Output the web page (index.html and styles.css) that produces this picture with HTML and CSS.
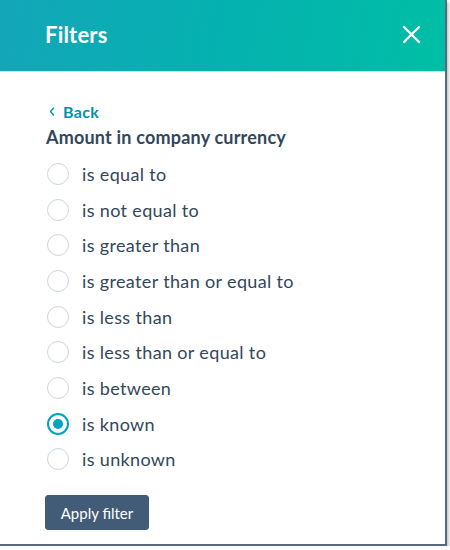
FILE: index.html
```html
<!DOCTYPE html>
<html>
<head>
<meta charset="utf-8">
<link rel="stylesheet" href="styles.css">
</head>
<body>
<div class="panel">
  <header class="header">
    <h1 class="title">Filters</h1>
    <svg class="close" width="19" height="19" viewBox="0 0 19 19"><path d="M2 2 L17 17 M17 2 L2 17" stroke="#fff" stroke-width="2.4" stroke-linecap="round" fill="none"/></svg>
  </header>
  <div class="content">
    <a class="back"><svg class="chev" width="6" height="9" viewBox="0 0 6 9"><path d="M4.5 1 L1.5 4.5 L4.5 8" stroke="#0091ae" stroke-width="1.4" fill="none" stroke-linecap="round" stroke-linejoin="round"/></svg>Back</a>
    <h2 class="heading">Amount in company currency</h2>
    <ul class="options">
      <li class="option"><span class="radio"></span>is equal to</li>
      <li class="option"><span class="radio"></span>is not equal to</li>
      <li class="option"><span class="radio"></span>is greater than</li>
      <li class="option"><span class="radio"></span>is greater than or equal to</li>
      <li class="option"><span class="radio"></span>is less than</li>
      <li class="option"><span class="radio"></span>is less than or equal to</li>
      <li class="option"><span class="radio"></span>is between</li>
      <li class="option"><span class="radio checked"></span>is known</li>
      <li class="option"><span class="radio"></span>is unknown</li>
    </ul>
    <button class="apply">Apply filter</button>
  </div>
</div>
</body>
</html>
```
FILE: styles.css
```css
html, body {
  margin: 0;
  padding: 0;
  background: #fff;
}
body {
  font-family: Lato, "Open Sans", sans-serif;
  color: #33475b;
}
.panel {
  width: 445px;
  height: 544px;
  background: #fff;
  border-right: 2px solid #5a6a7e;
  border-bottom: 2px solid #5a6a7e;
  box-shadow: 2px 2px 2px rgba(90, 106, 126, 0.35);
  display: flex;
  flex-direction: column;
}
.header {
  height: 71px;
  border-bottom: 1px solid #bfe6ec;
  background: linear-gradient(100deg, #13a5b9 0%, #05b2b0 50%, #00bea5 100%);
  display: flex;
  align-items: center;
  justify-content: space-between;
  padding: 0 24px 0 45px;
  flex-shrink: 0;
}
.title {
  margin: 0;
  color: #fff;
  font-size: 22px;
  font-weight: 700;
  letter-spacing: 0.2px;
  margin-top: -3px;
}
.close {
  margin-top: -3px;
}
.content {
  padding: 28px 0 0 46px;
  display: flex;
  flex-direction: column;
  align-items: flex-start;
}
.back {
  color: #0091ae;
  font-size: 16px;
  font-weight: 700;
  letter-spacing: 0.3px;
  display: flex;
  align-items: center;
  gap: 8px;
  height: 22px;
  margin-left: 3px;
}
.chev {
  margin-top: 1px;
}
.heading {
  margin: 2px 0 0 0;
  font-size: 18px;
  font-weight: 700;
  line-height: 26px;
  letter-spacing: 0.2px;
}
.options {
  list-style: none;
  margin: 6px 0 0 0;
  padding: 0;
}
.option {
  display: flex;
  align-items: center;
  height: 35.7px;
  font-size: 18px;
  letter-spacing: 0.35px;
  gap: 13px;
}
.radio {
  width: 22px;
  height: 22px;
  border: 1.5px solid #cbd6e2;
  border-radius: 50%;
  box-sizing: border-box;
  display: inline-block;
  position: relative;
  margin-left: 1px;
  flex-shrink: 0;
}
.radio.checked {
  border: 2px solid #00a4bd;
}
.radio.checked::after {
  content: "";
  position: absolute;
  left: 4px;
  top: 4px;
  width: 10px;
  height: 10px;
  border-radius: 50%;
  background: #00a4bd;
}
.apply {
  margin-top: 18px;
  width: 104px;
  height: 35px;
  background: #425b76;
  border: 1px solid #425b76;
  border-radius: 3px;
  color: #fff;
  font-family: Lato, sans-serif;
  font-size: 15px;
  font-weight: 400;
  letter-spacing: 0;
  padding: 0;
  margin-left: -1px;
}
```
